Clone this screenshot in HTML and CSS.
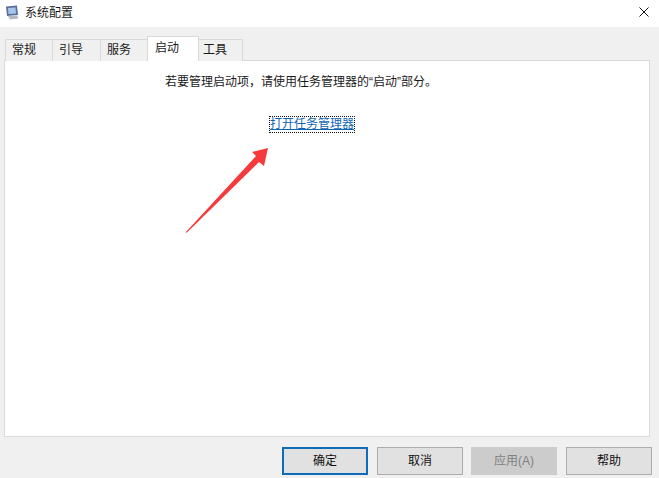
FILE: index.html
```html
<!DOCTYPE html>
<html lang="zh-CN">
<head>
    <meta charset="UTF-8">
    <meta name="viewport" content="width=device-width, initial-scale=1.0">
    <title>系统配置</title>
    <link rel="stylesheet" href="styles.css">
</head>
<body>
<div class="window">
    <header class="titlebar">
        <svg class="app-icon" width="14" height="15" viewBox="0 0 14 15">
            <path d="M1 1.5 L12 0.5 L13 10 L2 11 Z" fill="#5c6f9c"/>
            <path d="M3 3 L10.5 2.5 L11 8.5 L3.5 9 Z" fill="#a9c6ea"/>
            <path d="M3 11 L12 10.5 L13.5 13.5 L5 14.5 Z" fill="#b4b8bf"/>
        </svg>
        <span class="title">系统配置</span>
        <svg class="close" width="10" height="10" viewBox="0 0 10 10">
            <path d="M0.5 0.5 L9.5 9.5 M9.5 0.5 L0.5 9.5" stroke="#111" stroke-width="1" fill="none"/>
        </svg>
    </header>

    <div class="body">
        <nav class="tabs">
            <div class="tab">常规</div>
            <div class="tab">引导</div>
            <div class="tab">服务</div>
            <div class="tab active">启动</div>
            <div class="tab last">工具</div>
        </nav>

        <main class="panel">
            <p class="hint">若要管理启动项，请使用任务管理器的“启动”部分。</p>
            <a href="#taskmgr" class="link">打开任务管理器</a>
        </main>

        <footer class="buttons">
            <button class="btn primary">确定</button>
            <button class="btn">取消</button>
            <button class="btn disabled">应用(A)</button>
            <button class="btn">帮助</button>
        </footer>
    </div>
</div>

<!-- red annotation arrow on top of the dialog -->
<svg class="arrow" width="659" height="478" viewBox="0 0 659 478">
    <path d="M185.5 232.5 L256 156 L252 152 L268 148 L264 166 L259 162 L187 232.5 Z" fill="#f5393c"/>
</svg>
</body>
</html>
```

FILE: styles.css
```css
html, body {
    margin: 0;
    padding: 0;
    height: 100%;
    overflow: hidden;
    font-family: "Liberation Sans", "Noto Sans CJK SC", sans-serif;
    font-size: 12px;
    color: #1a1a1a;
}

.window {
    display: flex;
    flex-direction: column;
    height: 478px;
    background-color: #f0f0f0;
}

.titlebar {
    display: flex;
    align-items: center;
    height: 27px;
    padding: 0 10px 3px 5px;
    box-sizing: border-box;
    background-color: #fff;
}

.app-icon {
    margin-right: 6px;
}

.title {
    flex: 1;
    margin-top: -1px;
}

.body {
    flex: 1;
    display: flex;
    flex-direction: column;
    padding: 9px 7px 3px 3px;
}

.tabs {
    display: flex;
    align-items: flex-end;
    height: 25px;
    padding-left: 2px;
    position: relative;
    z-index: 1;
    margin-bottom: -1px;
}

.tab {
    width: 47px;
    height: 22px;
    line-height: 20px;
    padding-left: 6px;
    box-sizing: border-box;
    background-color: #f0f0f0;
    border: 1px solid #d9d9d9;
    border-right: none;
    border-bottom: none;
}

.tab:nth-child(2) {
    width: 48px;
}

.tab.last {
    width: 45px;
    padding-left: 4px;
    border-right: 1px solid #d9d9d9;
}

.tab.active {
    width: 52px;
    height: 25px;
    line-height: 22px;
    padding-left: 7px;
    background-color: #fff;
    border-right: 1px solid #d9d9d9;
    margin-right: -1px;
}

.panel {
    flex: 1;
    margin: 0 2px 0 1px;
    background-color: #fff;
    border: 1px solid #d9d9d9;
    display: flex;
    flex-direction: column;
    align-items: flex-start;
}

.hint {
    margin: 13px 0 0 160px;
    line-height: 16px;
}

.link {
    margin: 27px 0 0 265px;
    color: #0f64b4;
    line-height: 15px;
    outline: 1px dotted #111;
}

.buttons {
    display: flex;
    justify-content: flex-end;
    gap: 9px;
    padding: 10px 0 0;
    height: 28px;
}

.btn {
    width: 86px;
    height: 28px;
    padding: 0 0 3px;
    font: inherit;
    color: #111;
    background-color: #e1e1e1;
    border: 1px solid #adadad;
}

.btn.primary {
    border: 2px solid #0f6cb8;
}

.btn.disabled {
    margin-left: -1px;
    background-color: #cccccc;
    border-color: #cccccc;
    color: #808080;
}

.arrow {
    position: absolute;
    top: 0;
    left: 0;
    pointer-events: none;
}
```
